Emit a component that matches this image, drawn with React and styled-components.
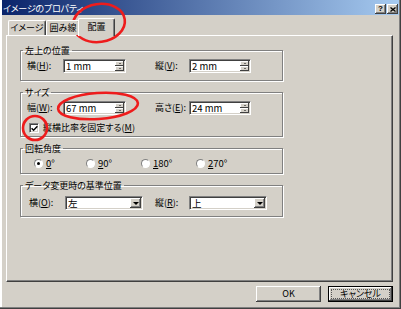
import React from 'react';
import styled, { createGlobalStyle } from 'styled-components';

const GlobalStyle = createGlobalStyle`
  html, body {
    margin: 0;
    padding: 0;
    background: #d4d0c8;
  }
  body {
    font-family: "Noto Sans CJK JP", "Liberation Sans", sans-serif;
    font-size: 9px;
    font-feature-settings: "palt";
    color: #000;
  }
`;

const Window = styled.div`
  position: relative;
  width: 401px;
  height: 309px;
  box-sizing: border-box;
  padding: 0 2px 2px 2px;
  background: #d4d0c8;
  box-shadow: inset -1px -1px 0 #404040, inset -2px -2px 0 #808080, inset 2px 0 0 #fff;
  display: flex;
  flex-direction: column;
`;

const TitleBar = styled.div`
  height: 15px;
  box-sizing: border-box;
  padding: 3px 1px 0 1px;
  display: flex;
  align-items: center;
  background: linear-gradient(to right, #0a246a, #a6caf0);
  color: #fff;
`;

const Title = styled.span`
  flex: 1;
  line-height: 10px;
  letter-spacing: -0.2px;
`;

const CaptionButton = styled.span`
  width: 11px;
  height: 10px;
  box-sizing: border-box;
  margin-left: ${p => p.$gap || 0}px;
  background: #d4d0c8;
  box-shadow: inset -1px -1px 0 #404040, inset 1px 1px 0 #fff, inset -2px -2px 0 #808080;
  display: flex;
  align-items: center;
  justify-content: center;
  color: #000;
  font-family: "Liberation Sans", sans-serif;
  font-weight: bold;
  font-size: 8px;
  line-height: 8px;
`;

const Content = styled.div`
  flex: 1;
  padding: 3px 6px 0 4px;
  display: flex;
  flex-direction: column;
`;

const TabRow = styled.div`
  height: 17px;
  padding-left: 2px;
  display: flex;
  align-items: flex-end;
`;

const Tab = styled.div`
  position: relative;
  z-index: 1;
  flex: 0 0 ${p => p.$w}px;
  height: ${p => (p.$active ? 18 : 15)}px;
  margin: 0 ${p => (p.$active ? -2 : 0)}px ${p => (p.$active ? -1 : 0)}px;
  box-sizing: border-box;
  background: #d4d0c8;
  border-top: 1px solid #fff;
  border-left: 1px solid #fff;
  border-right: 1px solid #404040;
  border-radius: 2px 2px 0 0;
  box-shadow: inset -1px 0 0 #808080;
  display: flex;
  align-items: ${p => (p.$active ? 'flex-start' : 'center')};
  padding-top: ${p => (p.$active ? 3 : 0)}px;
  justify-content: center;
  line-height: 10px;
  white-space: nowrap;
`;

const Panel = styled.div`
  height: 247px;
  box-sizing: border-box;
  border: 1px solid;
  border-color: #fff #404040 #404040 #fff;
  box-shadow: inset -1px -1px 0 #808080;
  padding: 9px 0 0 13px;
  display: flex;
  flex-direction: column;
  gap: 6px;
`;

const Group = styled.fieldset`
  width: 263px;
  min-width: 0;
  box-sizing: border-box;
  margin: 0;
  padding: ${p => p.$top}px 0 ${p => p.$bottom}px 0;
  border: 1px solid #808080;
  box-shadow: 1px 1px 0 #fff, inset 1px 1px 0 #fff;
  display: flex;
  flex-direction: column;
  gap: ${p => p.$gap || 0}px;
`;

const Legend = styled.legend`
  margin-left: 2px;
  padding: 0 2px;
  height: 11px;
  line-height: 11px;
`;

const FieldRow = styled.div`
  display: grid;
  grid-template-columns: ${p => p.$cols};
  align-items: center;
  padding-left: ${p => p.$indent}px;
`;

const Label = styled.span`
  line-height: 10px;
  white-space: nowrap;
  grid-column: ${p => p.$col || 'auto'};
`;

const Sunken = styled.div`
  height: 14px;
  box-sizing: border-box;
  padding: 1px;
  background: #fff;
  border: 1px solid;
  border-color: #808080 #fff #fff #808080;
  box-shadow: inset 1px 1px 0 #404040, inset -1px -1px 0 #d4d0c8;
  display: flex;
  grid-column: ${p => p.$col || 'auto'};
`;

const FieldText = styled.span`
  flex: 1;
  padding-left: 1px;
  font-size: 9.5px;
  line-height: 10px;
  white-space: nowrap;
`;

const SpinColumn = styled.div`
  width: 9px;
  display: flex;
  flex-direction: column;
`;

const SpinButton = styled.span`
  flex: 1;
  background: #d4d0c8;
  box-shadow: inset -1px -1px 0 #404040, inset 1px 1px 0 #fff;
  display: flex;
  align-items: center;
  justify-content: center;

  &::before {
    content: '';
    border-left: 1.5px solid transparent;
    border-right: 1.5px solid transparent;
    border-${p => (p.$up ? 'bottom' : 'top')}: 1.5px solid #000;
  }
`;

const DropButton = styled.span`
  width: 11px;
  background: #d4d0c8;
  box-shadow: inset -1px -1px 0 #404040, inset 1px 1px 0 #fff, inset -2px -2px 0 #808080;
  display: flex;
  align-items: center;
  justify-content: center;

  &::before {
    content: '';
    border-left: 3px solid transparent;
    border-right: 3px solid transparent;
    border-top: 3px solid #000;
  }
`;

const CheckRow = styled.label`
  display: flex;
  align-items: center;
  padding-left: 8px;
  line-height: 12px;
`;

const CheckBox = styled.span`
  width: 10px;
  height: 10px;
  margin-right: 4px;
  box-sizing: border-box;
  background: #fff;
  border: 1px solid;
  border-color: #808080 #fff #fff #808080;
  box-shadow: inset 1px 1px 0 #404040, inset -1px -1px 0 #d4d0c8;
  display: flex;
  align-items: center;
  justify-content: center;
`;

const RadioItem = styled.label`
  display: flex;
  align-items: center;
  line-height: 12px;
  font-size: 9.5px;
`;

const Radio = styled.span`
  width: 9px;
  height: 9px;
  margin-right: 3px;
  box-sizing: border-box;
  border-radius: 50%;
  background: #fff;
  border: 1px solid;
  border-color: #808080 #fff #fff #808080;
  display: flex;
  align-items: center;
  justify-content: center;

  &::after {
    content: '';
    width: 3px;
    height: 3px;
    border-radius: 50%;
    background: ${p => (p.$checked ? '#000' : 'transparent')};
  }
`;

const ButtonRow = styled.div`
  display: flex;
  justify-content: flex-end;
  gap: 7px;
  margin-top: 4px;
`;

const Button = styled.div`
  width: 65px;
  height: 16px;
  box-sizing: border-box;
  padding: ${p => (p.$default ? 2 : 0)}px;
  background: #d4d0c8;
  border: ${p => (p.$default ? '1px solid #000' : 'none')};
  box-shadow: inset -1px -1px 0 #404040, inset 1px 1px 0 #fff, inset -2px -2px 0 #808080;
  display: flex;
  align-items: center;
  justify-content: center;
  line-height: 10px;
`;

const FocusRect = styled.span`
  flex: 1;
  align-self: stretch;
  border: 1px dotted #555;
  display: flex;
  align-items: center;
  justify-content: center;
  line-height: 8px;
`;

const Annotations = styled.svg`
  position: absolute;
  left: 0;
  top: 0;
  pointer-events: none;
`;

function SpinField({ value, col }) {
  return (
    <Sunken $col={col}>
      <FieldText>{value}</FieldText>
      <SpinColumn>
        <SpinButton $up />
        <SpinButton />
      </SpinColumn>
    </Sunken>
  );
}

function SelectField({ value }) {
  return (
    <Sunken>
      <FieldText>{value}</FieldText>
      <DropButton />
    </Sunken>
  );
}

function Acc({ text, k, col }) {
  return (
    <Label $col={col}>
      {text}(<u>{k}</u>):
    </Label>
  );
}

const posCols = '36px 63px 29px 34px 62px';

export default function App() {
  return (
    <>
      <GlobalStyle />
      <Window>
        <TitleBar>
          <Title>イメージのプロパティ</Title>
          <CaptionButton>?</CaptionButton>
          <CaptionButton $gap={1}>
            <svg width="6" height="5" viewBox="0 0 6 5">
              <path d="M0.5 0.5 L5.5 4.5 M5.5 0.5 L0.5 4.5" stroke="#000" strokeWidth="1.3" />
            </svg>
          </CaptionButton>
        </TitleBar>

        <Content>
          <TabRow>
            <Tab $w={38}>イメージ</Tab>
            <Tab $w={34}>囲み線</Tab>
            <Tab $w={37} $active>配置</Tab>
          </TabRow>

          <Panel>
            <Group $top={3} $bottom={7}>
              <Legend>左上の位置</Legend>
              <FieldRow $cols={posCols} $indent={6}>
                <Acc text="横" k="H" />
                <SpinField value="1 mm" />
                <Acc text="縦" k="V" col="4" />
                <SpinField value="2 mm" />
              </FieldRow>
            </Group>

            <Group $top={3} $bottom={2} $gap={7}>
              <Legend>サイズ</Legend>
              <FieldRow $cols={posCols} $indent={6}>
                <Acc text="幅" k="W" />
                <SpinField value="67 mm" />
                <Acc text="高さ" k="E" col="4" />
                <SpinField value="24 mm" />
              </FieldRow>
              <CheckRow>
                <CheckBox>
                  <svg width="7" height="7" viewBox="0 0 7 7">
                    <path d="M0.6 3.2 L2.6 5.3 L6.4 1.2" stroke="#000" strokeWidth="1.4" fill="none" />
                  </svg>
                </CheckBox>
                縦横比率を固定する(<u>M</u>)
              </CheckRow>
            </Group>

            <Group $top={3} $bottom={4}>
              <Legend>回転角度</Legend>
              <FieldRow $cols="52px 55px 55px 55px" $indent={13}>
                <RadioItem><Radio $checked /><u>0</u>°</RadioItem>
                <RadioItem><Radio /><u>9</u>0°</RadioItem>
                <RadioItem><Radio /><u>1</u>80°</RadioItem>
                <RadioItem><Radio /><u>2</u>70°</RadioItem>
              </FieldRow>
            </Group>

            <Group $top={5} $bottom={6}>
              <Legend>データ変更時の基準位置</Legend>
              <FieldRow $cols="36px 78px 12px 34px 78px" $indent={8}>
                <Acc text="横" k="O" />
                <SelectField value="左" />
                <Acc text="縦" k="R" col="4" />
                <SelectField value="上" />
              </FieldRow>
            </Group>
          </Panel>

          <ButtonRow>
            <Button>OK</Button>
            <Button $default>
              <FocusRect>キャンセル</FocusRect>
            </Button>
          </ButtonRow>
        </Content>

        <Annotations width="401" height="309" viewBox="0 0 401 309">
          <g fill="none" stroke="#ee1c1c" strokeWidth="2.6">
            <ellipse cx="99" cy="23" rx="26" ry="19" transform="rotate(-8 99 23)" />
            <ellipse cx="98" cy="106" rx="40" ry="13" transform="rotate(-4 98 106)" />
            <ellipse cx="35" cy="128" rx="12" ry="12" />
          </g>
        </Annotations>
      </Window>
    </>
  );
}
